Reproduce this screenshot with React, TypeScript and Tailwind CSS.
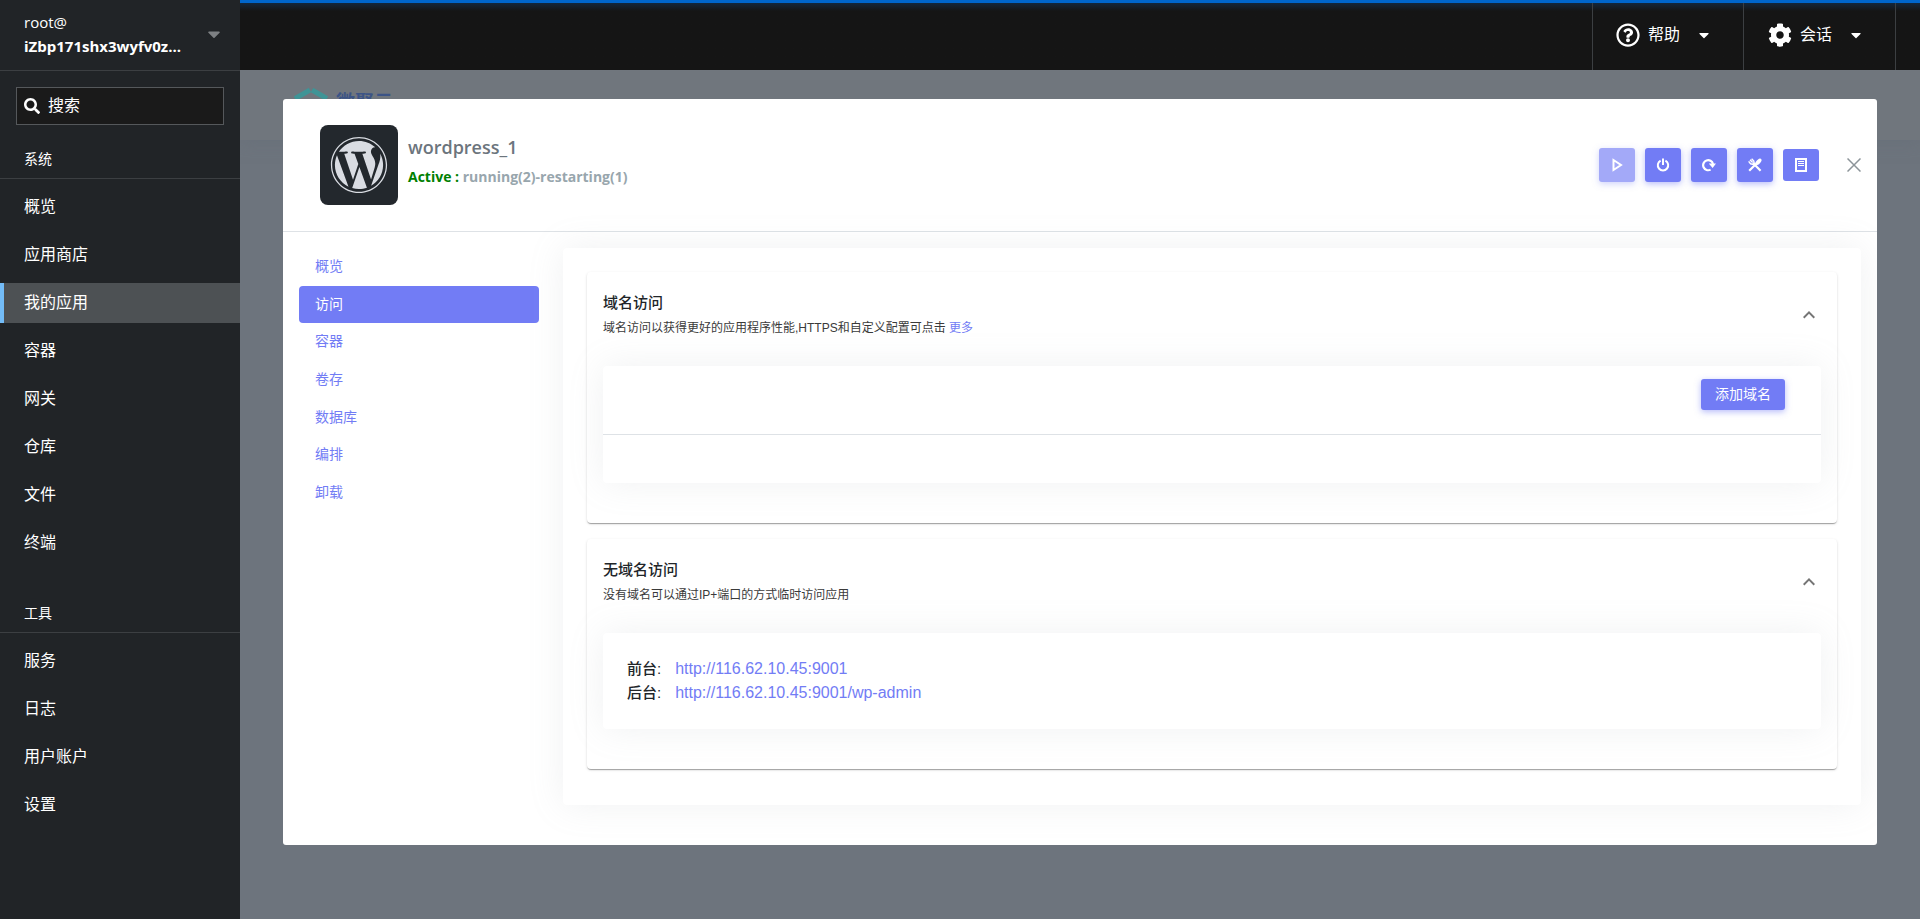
import { useState } from "react";
import type { ReactNode } from "react";
import { FaCaretDown, FaCog, FaRegQuestionCircle, FaSearch, FaWordpress } from "react-icons/fa";
import { MdExpandLess, MdExpandMore } from "react-icons/md";

const systemItems = ["概览", "应用商店", "我的应用", "容器", "网关", "仓库", "文件", "终端"];
const toolItems = ["服务", "日志", "用户账户", "设置"];
const tabs = ["概览", "访问", "容器", "卷存", "数据库", "编排", "卸载"];

const links = [
  { label: "前台:", url: "http://116.62.10.45:9001" },
  { label: "后台:", url: "http://116.62.10.45:9001/wp-admin" },
];

function NavGroup({ title, items, active, onSelect }: {
  title: string;
  items: string[];
  active: string;
  onSelect: (item: string) => void;
}) {
  return (
    <section>
      <h2 className="h-[38px] border-b border-[#3c3f42] px-6 text-sm leading-[36px]">{title}</h2>
      <ul className="space-y-2 py-2">
        {items.map(item => (
          <li key={item}>
            <a
              href="#"
              onClick={() => onSelect(item)}
              className={`block h-10 border-l-4 pl-5 text-base leading-10 ${
                item === active ? "border-[#73bcf7] bg-[#4d5154]" : "border-transparent"
              }`}
            >
              {item}
            </a>
          </li>
        ))}
      </ul>
    </section>
  );
}

function Sidebar() {
  const [active, setActive] = useState("我的应用");

  return (
    <aside className="w-60 shrink-0 bg-[#212427] text-white">
      <button className="flex h-[71px] w-full items-center justify-between border-b border-[#3c3f42] pr-4 pb-0.5 pl-6 text-left">
        <span className="min-w-0 font-['Open_Sans',sans-serif] leading-6">
          <span className="block text-[15px]">root@</span>
          <span className="block text-[15px] font-bold">iZbp171shx3wyfv0z...</span>
        </span>
        <FaCaretDown className="h-5 w-5 text-[#7d8083]" />
      </button>
      <div className="m-4 flex h-[38px] items-center gap-2 border border-[#55585b] bg-[#1a1a1a] px-[7px]">
        <FaSearch className="h-4 w-4 shrink-0" />
        <input
          aria-label="搜索"
          placeholder="搜索"
          className="w-full min-w-0 bg-transparent text-base outline-none placeholder:text-white"
        />
      </div>
      <NavGroup title="系统" items={systemItems} active={active} onSelect={setActive} />
      <div className="h-6" />
      <NavGroup title="工具" items={toolItems} active={active} onSelect={setActive} />
    </aside>
  );
}

function TopBar() {
  return (
    <header className="flex h-[70px] justify-end border-t-[3px] border-[#0066cc] bg-[#151515] bg-linear-to-b from-[#12273d] to-[#151515] to-[8px] pr-6 text-base text-white">
      <button className="flex w-[151px] items-center border-l border-[#3c3f42] pb-[3px] pl-[23px]">
        <FaRegQuestionCircle className="h-6 w-6" />
        <span className="ml-2">帮助</span>
        <FaCaretDown className="ml-4 h-4 w-4" />
      </button>
      <button className="flex w-[153px] items-center border-x border-[#3c3f42] pb-[3px] pl-6">
        <FaCog className="h-6 w-6" />
        <span className="ml-2">会话</span>
        <FaCaretDown className="ml-4 h-4 w-4" />
      </button>
    </header>
  );
}

function Glyph({ children }: { children: ReactNode }) {
  return (
    <svg viewBox="0 0 14 14" className="h-3.5 w-3.5" fill="none" stroke="currentColor" strokeWidth="2">
      {children}
    </svg>
  );
}

const actions = [
  {
    name: "启动",
    disabled: true,
    icon: <Glyph><path d="M3.5 2v10L11 7z" /></Glyph>,
  },
  {
    name: "停止",
    icon: <Glyph><path d="M4.6 2.6a5.2 5.2 0 1 0 4.8 0M7 .6v6.4" /></Glyph>,
  },
  {
    name: "重启",
    icon: (
      <Glyph>
        <path d="M8.6 11.6A5 5 0 1 1 11 6" strokeWidth="2.2" />
        <path d="M6.8 5.6h7.2l-3.4 4.400z" fill="currentColor" stroke="none" />
      </Glyph>
    ),
  },
  {
    name: "重建",
    icon: (
      <Glyph>
        <path d="M5 5l7.6 7.8M1.2 12.8l6-6" strokeWidth="2.2" />
        <path d="M.6 3.4l2 2.4 2.6.6 1-1-.4-2.4L3.6.8M2 1.8l2.6 2.8" strokeWidth="1.4" />
        <path d="M6.5 8C6.5 4.6 9.4 1.2 12 .6c1.2.2 1.8 1.2 1.5 2.2C12.6 5.4 10 7.6 6.5 8z" fill="currentColor" stroke="none" />
      </Glyph>
    ),
  },
  {
    name: "日志",
    icon: (
      <Glyph>
        <path d="M2 1h10v12H2z" />
        <path d="M4 3.5h6M4 5.5h6M4 7.5h6" strokeWidth="1" />
      </Glyph>
    ),
  },
];

function AppHeader() {
  return (
    <div className="flex h-[133px] items-center border-b border-[#dee2e6] pr-4 pl-[37px]">
      <div className="flex h-20 w-[78px] shrink-0 items-center justify-center rounded-lg bg-[#23282d]">
        <FaWordpress className="h-[58px] w-[58px] text-[#d9dce2]" />
      </div>
      <div className="ml-2.5 pb-[7px] font-['Open_Sans',sans-serif]">
        <h1 className="text-lg leading-6 font-semibold text-[#6c757d]">wordpress_1</h1>
        <p className="mt-1.5 text-sm leading-6 font-bold text-[#98a6ad]">
          <span className="text-[#008000]">Active : </span>
          running(2)-restarting(1)
        </p>
      </div>
      <div className="ml-auto flex items-center gap-2.5">
        {actions.map(action => (
          <button
            key={action.name}
            aria-label={action.name}
            disabled={action.disabled}
            className="flex h-[34px] w-9 items-center justify-center rounded-[3px] bg-[#727cf5] text-white shadow-[0_2px_6px_0_rgba(114,124,245,0.5)] last:h-8 last:shadow-none disabled:opacity-65"
          >
            {action.icon}
          </button>
        ))}
      </div>
      <button aria-label="关闭" className="ml-7 text-[#8c9499]">
        <svg viewBox="0 0 14 14" className="h-3.5 w-3.5" stroke="currentColor" strokeWidth="1.5">
          <path d="M.5.5l13 13M13.5.5l-13 13" />
        </svg>
      </button>
    </div>
  );
}

function Panel({ title, description, children }: { title: string; description: ReactNode; children: ReactNode }) {
  const [open, setOpen] = useState(true);

  return (
    <section className="rounded bg-white px-4 pb-10 shadow-[0_2px_1px_-1px_rgba(0,0,0,0.2),0_1px_1px_0_rgba(0,0,0,0.14),0_1px_3px_0_rgba(0,0,0,0.12)]">
      <div className="flex items-center justify-between pt-[18px] pb-[26px]">
        <div>
          <h3 className="text-[15px] leading-[26px] font-medium text-[#212529]">{title}</h3>
          <p className="text-xs leading-6 text-[#3a3a3a]">{description}</p>
        </div>
        <button aria-label={title} aria-expanded={open} onClick={() => setOpen(!open)} className="text-[#757575]">
          {open ? <MdExpandLess className="h-6 w-6" /> : <MdExpandMore className="h-6 w-6" />}
        </button>
      </div>
      {open && <div className="rounded-sm bg-white shadow-[0_0_35px_0_rgba(154,161,171,0.15)]">{children}</div>}
    </section>
  );
}

function AppDialog() {
  const [tab, setTab] = useState("访问");

  return (
    <div role="dialog" aria-label="wordpress_1" className="absolute inset-x-[43px] top-[29px] overflow-hidden rounded-[3px] bg-white">
      <AppHeader />
      <div className="flex gap-6 px-4 pt-4 pb-10">
        <nav className="grid h-[263px] w-60 shrink-0 auto-rows-fr text-sm text-[#727cf5]">
          {tabs.map(item => (
            <a
              key={item}
              href="#"
              onClick={() => setTab(item)}
              className={`flex items-center rounded px-4 pb-px ${item === tab ? "bg-[#727cf5] text-white" : ""}`}
            >
              {item}
            </a>
          ))}
        </nav>
        <div className="min-w-0 flex-1 space-y-4 rounded p-6 pb-9 shadow-[0_0_35px_0_rgba(154,161,171,0.15)]">
          <Panel
            title="域名访问"
            description={
              <>
                域名访问以获得更好的应用程序性能,HTTPS和自定义配置可点击 <a href="#" className="text-[#727cf5]">更多</a>
              </>
            }
          >
            <div className="flex h-[69px] items-start justify-end border-b border-[#dee2e6] px-9 pt-[13px]">
              <button className="h-[31px] rounded-[3px] bg-[#727cf5] px-3.5 pb-0.5 text-sm text-white shadow-[0_2px_6px_0_rgba(114,124,245,0.5)]">
                添加域名
              </button>
            </div>
            <div className="h-12" />
          </Panel>
          <Panel title="无域名访问" description="没有域名可以通过IP+端口的方式临时访问应用">
            <div className="p-6">
              {links.map(link => (
                <p key={link.url} className="flex gap-3.5 leading-6">
                  <span className="text-[15px] leading-6 font-medium text-[#212529]">{link.label}</span>
                  <a href={link.url} className="text-base text-[#727cf5]">{link.url}</a>
                </p>
              ))}
            </div>
          </Panel>
        </div>
      </div>
    </div>
  );
}

export default function App() {
  return (
    <div className="flex min-h-screen font-['Liberation_Sans','Noto_Sans_CJK_SC',sans-serif]">
      <Sidebar />
      <div className="flex min-w-0 flex-1 flex-col">
        <TopBar />
        <main className="relative flex-1 overflow-hidden bg-[#6d747d]">
          <div className="flex h-[70px] items-start gap-2 bg-[#70767d] px-[54px] pt-[18px] shadow-[0_0_16px_0_rgba(100,108,118,0.6)]">
            <svg viewBox="0 0 34 38" className="h-[38px] w-[34px]" fill="none" stroke="#3f9496" strokeWidth="5">
              <path d="M1 10.500L16 2M18 2L33 10.500M3 15v12l14 8 14-8V15" />
            </svg>
            <span className="pt-px text-[19px] leading-7 font-bold text-[#3c5486]">微聚云</span>
          </div>
          <AppDialog />
        </main>
      </div>
    </div>
  );
}
